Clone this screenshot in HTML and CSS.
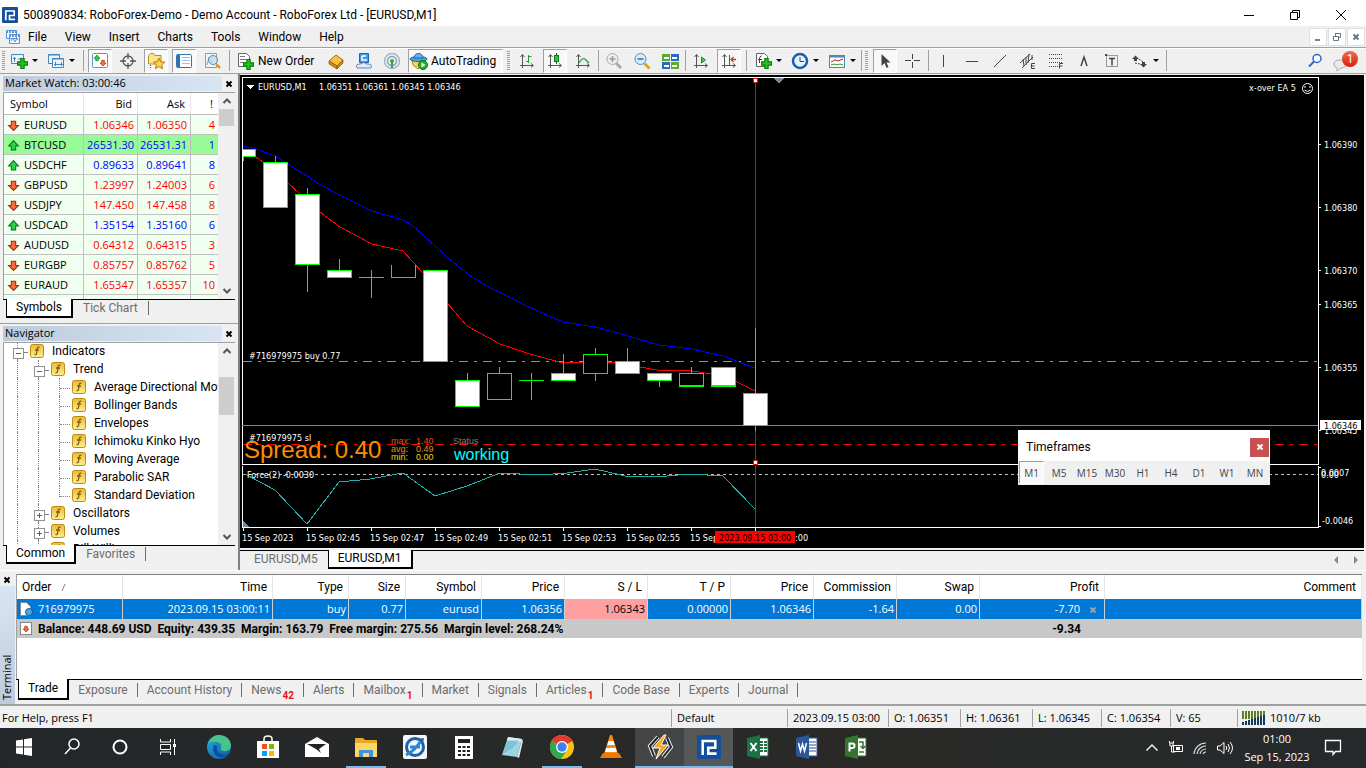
FILE: index.html
```html
<!DOCTYPE html>
<html lang="en">
<head>
<meta charset="utf-8">
<title>500890834: RoboForex-Demo - Demo Account - RoboForex Ltd - [EURUSD,M1]</title>
<link rel="stylesheet" href="styles.css">
</head>
<body>
<svg class="defs" aria-hidden="true">
  <defs>
    <linearGradient id="gold" x1="0" y1="0" x2="0" y2="1"><stop offset="0" stop-color="#e8b93a"/><stop offset="1" stop-color="#fdf08c"/></linearGradient>
    <linearGradient id="edge" x1="0" y1="0" x2="1" y2="1"><stop offset="0" stop-color="#2aa7d8"/><stop offset="1" stop-color="#0c59a4"/></linearGradient>
    <symbol id="up" viewBox="0 0 12 12"><path d="M6 1.500L10.500 6.500H8V10H4V6.500H1.500z" fill="#2fd04a" stroke="#0a7a1c"/></symbol>
    <symbol id="down" viewBox="0 0 12 12"><path d="M6 10.500L1.500 6H4V2H8V6H10.500z" fill="#ff6a3c" stroke="#a82808"/></symbol>
    <symbol id="fn" viewBox="0 0 14 14"><rect x=".5" y=".5" width="13" height="13" rx="2" fill="url(#gold)" stroke="#c08a10"/><path d="M9.500 3.500Q7.500 2.500 7.200 5L6.500 9.500Q6.300 11 4.500 10.500M5 6h4" fill="none" stroke="#8a5a10" stroke-width="1.300"/></symbol>
    <symbol id="axes" viewBox="0 0 20 20"><path d="M5.500 4v13M3 14.500h13M3.500 6l2-2.500 2 2.500M14 12.500l2.500 2-2.500 2" fill="none" stroke="#555"/></symbol>
    <symbol id="plus" viewBox="0 0 10 10"><path d="M3.500.5h3v3h3v3h-3v3h-3v-3h-3v-3h3z" fill="#22c322" stroke="#0a7d0a"/></symbol>
    <symbol id="robo" viewBox="0 0 16 16"><rect width="16" height="16" rx="1" fill="#14509a"/><path d="M3.800 13.300V4h8.400v4.500H7.500V12.400H13" fill="none" stroke="#fff" stroke-width="1.700"/></symbol>
    <symbol id="cross" viewBox="0 0 8 8"><path d="M1.500 1.500l5 5M6.500 1.500l-5 5" stroke="currentColor" stroke-width="2"/></symbol>
    <symbol id="caret-up" viewBox="0 0 10 10"><path d="M1.500 7L5 3.500 8.500 7" fill="none" stroke="#555" stroke-width="2"/></symbol>
    <symbol id="caret-down" viewBox="0 0 10 10"><path d="M1.500 3L5 6.500 8.500 3" fill="none" stroke="#555" stroke-width="2"/></symbol>
    <symbol id="lens" viewBox="0 0 20 20"><path d="M12.500 12.500l5 5" stroke="#d9a520" stroke-width="3"/></symbol>
  </defs>
</svg>

<header class="titlebar">
  <svg class="app-icon"><use href="#robo"/></svg>
  <h1 class="title">500890834: RoboForex-Demo - Demo Account - RoboForex Ltd - [EURUSD,M1]</h1>
  <button class="win" aria-label="Minimize"><svg width="12" height="12"><path d="M1 6.500h10" stroke="#000"/></svg></button>
  <button class="win" aria-label="Restore"><svg width="12" height="12"><path d="M1.500 3.500h7v7h-7zM3.500 3.500v-2h7v7h-2" fill="none" stroke="#000"/></svg></button>
  <button class="win" aria-label="Close"><svg width="12" height="12"><path d="M1 1l10 10M11 1L1 11" stroke="#000"/></svg></button>
</header>

<nav class="menubar">
  <svg class="menu-icon" width="16" height="16"><path d="M1.500 1.500h10v8h-10zM4.500 5.500h10v9h-10z" fill="#f3f9ff" stroke="#5b93d8"/><path d="M1 3h11M4 7h11" stroke="#5b93d8" stroke-width="2" stroke-dasharray="2 1"/><path d="M6 12l2-3 2 4 2-4 1 2" fill="none" stroke="#5b93d8"/></svg>
  <button>File</button><button>View</button><button>Insert</button><button>Charts</button><button>Tools</button><button>Window</button><button>Help</button>
  <span class="spacer"></span>
  <button class="mdi" aria-label="Minimize chart"><svg width="10" height="10"><path d="M2 8h5" stroke="#778899" stroke-width="2"/></svg></button>
  <button class="mdi" aria-label="Restore chart"><svg width="10" height="10"><path d="M1.500 4.500h5v4h-5zM3.500 4v-2.500h5v4h-2M1 4.500h6M3 1.500h6" fill="none" stroke="#667788"/></svg></button>
  <button class="mdi" aria-label="Close chart"><svg width="8" height="8"><use href="#cross"/></svg></button>
</nav>

<div class="toolbar">
  <span class="grip"></span>
  <button class="tb dd" aria-label="New chart"><svg width="20" height="20"><path d="M2.500 3.500h12v9h-12z" fill="#eaf4fd" stroke="#4a86b8"/><path d="M5.500 6v5M4 7.500h3M9 8h4" stroke="#4a86b8"/><use href="#plus" x="8" y="7" width="11" height="11"/></svg></button>
  <button class="tb dd" aria-label="Profiles"><svg width="20" height="20"><path d="M2.500 3.500h11v9h-11z" fill="#eaf4fd" stroke="#4a86b8"/><path d="M6.500 7.500h11v9h-11z" fill="#eaf4fd" stroke="#4a86b8"/><path d="M2 4h12M6 8h12" stroke="#4a86b8"/><path d="M9.500 11v4M15.500 11v4M8 13.500h9" stroke="#4a86b8"/></svg></button>
  <span class="sep first"></span>
  <button class="tb on" aria-label="Market Watch"><svg width="20" height="20"><rect x="2.500" y="2.500" width="15" height="14" rx="1" fill="#fff" stroke="#5a96cc"/><use href="#up" x="3" y="3" width="8" height="8"/><use href="#down" x="9" y="8" width="8" height="8"/></svg></button>
  <button class="tb" aria-label="Data Window"><svg width="20" height="20"><circle cx="10" cy="10" r="5" fill="none" stroke="#555" stroke-width="1.300"/><path d="M10 2v6M10 12v6M2 10h6M12 10h6" stroke="#555" stroke-width="1.300"/></svg></button>
  <button class="tb on" aria-label="Navigator"><svg width="20" height="20"><path d="M2.500 13V4.500l2-2h3l1.500 2h6V13z" fill="#fbe48c" stroke="#b98d1c"/><path d="M4.500 14v4" stroke="#555" stroke-dasharray="1 1"/><path d="M13 7l1.700 3.800 4 .3-3 2.700 1 4-3.700-2.200-3.600 2.200 1-4-3-2.700 4-.3z" fill="#ffd340" stroke="#b07c10"/></svg></button>
  <button class="tb on" aria-label="Terminal"><svg width="20" height="20"><rect x="2.500" y="3.500" width="15" height="13" rx="1" fill="#fff" stroke="#2f74b5"/><path d="M4.500 4v12" stroke="#2f74b5" stroke-width="3"/><path d="M8 6.500h8M8 9.500h8M8 12.500h8" stroke="#9bc1e6"/></svg></button>
  <button class="tb" aria-label="Strategy Tester"><svg width="20" height="20"><path d="M3.500 2.500h11v14h-11z" fill="#f4f4f4" stroke="#999"/><path d="M5 14l2-8 2 6 2-7" fill="none" stroke="#8aa"/><circle cx="11" cy="9" r="4.500" fill="#bfe0f5" fill-opacity=".8" stroke="#5a8db8"/><path d="M14 13l4 4" stroke="#d9a520" stroke-width="2.500"/></svg></button>
  <span class="sep"></span>
  <button class="tb wide"><svg width="20" height="20"><path d="M3.500 2.500h8l3 3v10h-11z" fill="#fff" stroke="#666"/><path d="M5 5.500h5M5 8.500h7M5 11.500h4" stroke="#777"/><use href="#plus" x="8" y="8" width="11" height="11"/></svg>New Order</button>
  <button class="tb" aria-label="MetaEditor"><svg width="20" height="20"><path d="M3 10l7-6 7 5-6 6z" fill="#f5c23c" stroke="#a06a10"/><path d="M3 10v3l8 5v-3zM11 15v3l6-6V9z" fill="#d08a18" stroke="#8a5808" stroke-width=".7"/></svg></button>
  <button class="tb" aria-label="MQL5 community"><svg width="20" height="20"><path d="M5.500 2.500h9v9h-9z" fill="#3d9be8" stroke="#1766b5"/><path d="M8 5h4M8 5v4h5" stroke="#fff" fill="none" stroke-width="1.500"/><path d="M3 17q-2-4 3-4 4-3 7 0 6 0 4 4z" fill="#dcecf8" stroke="#6a87aa"/></svg></button>
  <button class="tb" aria-label="Signals"><svg width="20" height="20"><circle cx="10" cy="10" r="7.500" fill="none" stroke="#9fb8c8" stroke-width="1.500"/><circle cx="10" cy="10" r="4.500" fill="none" stroke="#7fa0b8" stroke-width="1.500"/><circle cx="10" cy="10" r="2" fill="#39a846"/><path d="M10 10v7" stroke="#39a846" stroke-width="2"/></svg></button>
  <button class="tb auto on"><svg width="20" height="20"><path d="M3 9l1 5 5 4 5-4 1-5z" fill="#f8d44c" stroke="#b58712"/><ellipse cx="9.500" cy="8" rx="8.500" ry="2.500" fill="#4aa0dc" stroke="#1c6aa8"/><path d="M5 7Q5.500 2.500 9.500 2.500T14 7z" fill="#62b4ea" stroke="#1c6aa8"/><circle cx="14" cy="14" r="4.500" fill="#28b02c" stroke="#0c7a10"/><path d="M12.500 11.500l4 2.500-4 2.500z" fill="#fff"/></svg>AutoTrading</button>
  <span class="grip gap"></span>
  <button class="tb" aria-label="Bar chart"><svg width="20" height="20"><use href="#axes"/><path d="M11.500 4v8M9 10.500h2.500M11.500 5.500h3" stroke="#2a9a3a"/></svg></button>
  <button class="tb on" aria-label="Candlesticks"><svg width="20" height="20"><use href="#axes"/><path d="M11.500 2v11" stroke="#0a6a1a"/><rect x="9.500" y="4.500" width="4" height="6" fill="#28c840" stroke="#0a7a1c"/></svg></button>
  <button class="tb" aria-label="Line chart"><svg width="20" height="20"><use href="#axes"/><path d="M6 12q4-7 7-3l3 3" fill="none" stroke="#2a9a3a" stroke-width="1.300"/></svg></button>
  <span class="sep thin"></span>
  <button class="tb" aria-label="Zoom in"><svg width="20" height="20"><path d="M12 12l5 5" stroke="#aaa" stroke-width="3"/><circle cx="8.500" cy="8" r="5.500" fill="#eee" stroke="#aaa"/><path d="M5.500 8h6M8.500 5v6" stroke="#999" stroke-width="1.500"/></svg></button>
  <button class="tb" aria-label="Zoom out"><svg width="20" height="20"><use href="#lens"/><circle cx="8.500" cy="8" r="5.500" fill="#d6ecfb" stroke="#4a90cc"/><path d="M5.500 8h6" stroke="#2a70b8" stroke-width="1.500"/></svg></button>
  <button class="tb" aria-label="Tile windows"><svg width="20" height="20"><path d="M2 3h8v7H2zM11 11h8v7h-8z" fill="#5cae28"/><path d="M11 3h8v7h-8zM2 11h8v7H2z" fill="#2a68c8"/><path d="M4 6h5v2H4zM12 6h5v2h-5zM4 14h5v2H4zM12 14h5v2h-5z" fill="#fff"/></svg></button>
  <span class="sep thin"></span>
  <button class="tb" aria-label="Auto scroll"><svg width="20" height="20"><use href="#axes"/><path d="M10.500 6l4 3-4 3z" fill="#48c858" stroke="#1a8a2a"/></svg></button>
  <button class="tb on" aria-label="Chart shift"><svg width="20" height="20"><use href="#axes"/><path d="M10.500 4v10" stroke="#555"/><path d="M12 8.500h5M14.500 6l-2.500 2.500 2.500 2.500" fill="none" stroke="#b84020" stroke-width="1.300"/></svg></button>
  <span class="sep"></span>
  <button class="tb dd" aria-label="Indicators"><svg width="20" height="20"><path d="M3.500 2.500h8l3 3v10h-11z" fill="#fff" stroke="#666"/><path d="M8.500 5q-2 0-2 3v4M5 8.500h4" fill="none" stroke="#444"/><use href="#plus" x="8" y="7" width="11" height="11"/></svg></button>
  <button class="tb dd" aria-label="Periods"><svg width="20" height="20"><circle cx="10" cy="10" r="7" fill="#e8f4fd" stroke="#1c5fb0" stroke-width="2.500"/><path d="M10 6v4.500h4" fill="none" stroke="#345"/></svg></button>
  <button class="tb dd" aria-label="Templates"><svg width="20" height="20"><rect x="2.500" y="4.500" width="15" height="12" fill="#fff" stroke="#4a86b8"/><path d="M2 5.500h16" stroke="#4a86b8" stroke-width="2"/><path d="M4 11l4-2 3 1 5-2" fill="none" stroke="#a03020"/><path d="M4 14l3-1 3 1 3-1 3 1" fill="none" stroke="#2a9a3a"/></svg></button>
  <span class="sep thin"></span>
  <span class="grip gap"></span>
  <button class="tb on" aria-label="Cursor"><svg width="20" height="20"><path d="M6.500 3v12l3-3 2 5 2-1-2-4.500h4z" fill="#444"/></svg></button>
  <button class="tb" aria-label="Crosshair"><svg width="20" height="20"><path d="M9.500 3v5M9.500 11v6M2 9.500h6M11 9.500h6" stroke="#444"/></svg></button>
  <span class="sep thin"></span>
  <button class="tb" aria-label="Vertical line"><svg width="20" height="20"><path d="M9.500 4v12" stroke="#444"/></svg></button>
  <button class="tb" aria-label="Horizontal line"><svg width="20" height="20"><path d="M4 10.500h12" stroke="#444"/></svg></button>
  <button class="tb" aria-label="Trendline"><svg width="20" height="20"><path d="M4 16L16 4" stroke="#444"/></svg></button>
  <button class="tb" aria-label="Equidistant channel"><svg width="20" height="20"><path d="M2 12l10-9M4 17L15 6M5 8l1 7M8 6v8M11 3l-1 9M14 4v5" stroke="#444"/><path d="M17 12.500h-3.500v5H17M13.500 15h3" fill="none" stroke="#444"/></svg></button>
  <button class="tb" aria-label="Fibonacci"><svg width="20" height="20"><path d="M3 3.500h13M3 7.500h13M3 11.500h13M3 15.500h9" stroke="#444" stroke-dasharray="1 1"/><path d="M17 12.500h-3.500v5M13.500 15h3" fill="none" stroke="#444"/></svg></button>
  <button class="tb" aria-label="Text"><svg width="20" height="20"><path d="M7 15l3-9 3 9" fill="none" stroke="#444" stroke-width="1.500"/></svg></button>
  <button class="tb" aria-label="Text label"><svg width="20" height="20"><path d="M4.500 4.500h11v11h-11z" fill="none" stroke="#444" stroke-dasharray="1 1"/><path d="M7 7.500h6M10 7.500v7" stroke="#444" stroke-width="1.500"/><path d="M3 3h2v2H3z" fill="#444"/></svg></button>
  <button class="tb dd" aria-label="Arrows"><svg width="20" height="20"><path d="M2 8l3.500-3.500L9 8H7v2H4V8zM10 13h2v-2h3v2h2l-3.500 3.500z" fill="#444"/><path d="M5 12l5 1M9 8l4 3" stroke="#444" stroke-dasharray="2 1"/></svg></button>
  <span class="sep"></span>
  <span class="spacer"></span>
  <button class="tb" aria-label="Search"><svg width="20" height="20"><circle cx="12" cy="7.500" r="4" fill="#fff" stroke="#2a68d0" stroke-width="1.500"/><path d="M9 10.500l-5 5" stroke="#2a68d0" stroke-width="2"/></svg></button>
  <button class="tb chat" aria-label="Messages: 1"><svg width="24" height="22"><path d="M1 14q0-4 6-4 6 0 6 4t-5 4l-4 3v-3q-3-1-3-4z" fill="#e8eaf0" stroke="#a8acb8"/></svg><span class="count">1</span></button>
</div>

<main class="main">
  <div class="left">
    <section class="panel market">
      <div class="panel-head"><h2>Market Watch: 03:00:46</h2><button class="x" aria-label="Close Market Watch"><svg width="8" height="8"><use href="#cross"/></svg></button></div>
      <div class="panel-body">
        <table class="quotes">
          <thead><tr><th>Symbol</th><th>Bid</th><th>Ask</th><th>!</th></tr></thead>
          <tbody>
            <tr class="dn"><td><svg><use href="#down"/></svg>EURUSD</td><td>1.06346</td><td>1.06350</td><td>4</td></tr>
            <tr class="uq hot"><td><svg><use href="#up"/></svg>BTCUSD</td><td>26531.30</td><td>26531.31</td><td>1</td></tr>
            <tr class="uq"><td><svg><use href="#up"/></svg>USDCHF</td><td>0.89633</td><td>0.89641</td><td>8</td></tr>
            <tr class="dn"><td><svg><use href="#down"/></svg>GBPUSD</td><td>1.23997</td><td>1.24003</td><td>6</td></tr>
            <tr class="dn"><td><svg><use href="#down"/></svg>USDJPY</td><td>147.450</td><td>147.458</td><td>8</td></tr>
            <tr class="uq"><td><svg><use href="#up"/></svg>USDCAD</td><td>1.35154</td><td>1.35160</td><td>6</td></tr>
            <tr class="dn"><td><svg><use href="#down"/></svg>AUDUSD</td><td>0.64312</td><td>0.64315</td><td>3</td></tr>
            <tr class="dn"><td><svg><use href="#down"/></svg>EURGBP</td><td>0.85757</td><td>0.85762</td><td>5</td></tr>
            <tr class="dn"><td><svg><use href="#down"/></svg>EURAUD</td><td>1.65347</td><td>1.65357</td><td>10</td></tr>
            <tr><td></td><td></td><td></td><td></td></tr>
          </tbody>
        </table>
        <div class="scroll"><svg><use href="#caret-up"/></svg><i class="thumb t1"></i><svg><use href="#caret-down"/></svg></div>
      </div>
      <div class="tabs"><button class="tab active">Symbols</button><button class="tab">Tick Chart</button></div>
    </section>
    <section class="panel navigator">
      <div class="panel-head"><h2>Navigator</h2><button class="x" aria-label="Close Navigator"><svg width="8" height="8"><use href="#cross"/></svg></button></div>
      <div class="panel-body">
        <ul class="tree">
          <li><b class="v box minus"></b><svg><use href="#fn"/></svg>Indicators</li>
          <li><b class="v"></b><b class="v box minus"></b><svg><use href="#fn"/></svg>Trend</li>
          <li><b class="v"></b><b class="v"></b><b class="v h"></b><svg><use href="#fn"/></svg>Average Directional Movement</li>
          <li><b class="v"></b><b class="v"></b><b class="v h"></b><svg><use href="#fn"/></svg>Bollinger Bands</li>
          <li><b class="v"></b><b class="v"></b><b class="v h"></b><svg><use href="#fn"/></svg>Envelopes</li>
          <li><b class="v"></b><b class="v"></b><b class="v h"></b><svg><use href="#fn"/></svg>Ichimoku Kinko Hyo</li>
          <li><b class="v"></b><b class="v"></b><b class="v h"></b><svg><use href="#fn"/></svg>Moving Average</li>
          <li><b class="v"></b><b class="v"></b><b class="v h"></b><svg><use href="#fn"/></svg>Parabolic SAR</li>
          <li><b class="v"></b><b class="v"></b><b class="v h last"></b><svg><use href="#fn"/></svg>Standard Deviation</li>
          <li><b class="v"></b><b class="v box plus"></b><svg><use href="#fn"/></svg>Oscillators</li>
          <li><b class="v"></b><b class="v box plus"></b><svg><use href="#fn"/></svg>Volumes</li>
          <li><b class="v"></b><b class="v"></b><svg><use href="#fn"/></svg>Bill Williams</li>
        </ul>
        <div class="scroll"><svg><use href="#caret-up"/></svg><i class="thumb t2"></i><svg><use href="#caret-down"/></svg></div>
      </div>
      <div class="tabs"><button class="tab active">Common</button><button class="tab">Favorites</button></div>
    </section>
  </div>

  <section class="chart">
    <div class="canvas">
      <svg class="plot">
        <g transform="translate(-240 -75)" fill="none" shape-rendering="crispEdges">
          <path d="M242.500 464.500V77.500H3000M242 464.500H3000M242.500 466V527.500H3000" stroke="#fff"/>
          <path d="M242 425.500H3000" stroke="#778899"/>
          <path d="M243 361.500H3000" stroke="#32cd32" stroke-dasharray="9 6 3 6"/>
          <path d="M243 444.500H3000" stroke="#f00" stroke-dasharray="9 6 3 6"/>
          <path d="M243 474.500H3000" stroke="#c0c0c0" stroke-dasharray="3 3"/>
          <path d="M755.500 78V464M755.500 466V527" stroke="#f00"/>
          <polyline stroke="#00f" points="243,146 256,149 275,156 307,176 319,184 340,195 372,211 403,220 412,225 448,258 469,275 485,285 525,305 540,312 563,322 595,327 625,335 658,345 692,349 723,356 755,368"/>
          <polyline stroke="#f00" points="243,152 256,157 263,162 288,183 300,194 320,212 340,227 372,244 403,251 423,273 448,304 467,326 500,344 530,354 563,363 608,362 640,367 657,370 692,371 712,374 737,382 755,391"/>
          <polyline stroke="#20b2aa" points="245,474 260,482 275,490 307,524 339,482 370,479 403,473 435,496 467,486 500,473 540,475 567,473 595,469 625,476 667,476 690,474 723,476 755,509"/>
          <path stroke="#0f0" d="M243.500 156V161M275.500 156V162M307.500 188V292M339.500 259V270M359 277.500H384M371.500 270V298M391.500 265V277.500H415.500V265M467.500 373V380M499.500 367V373M519 380.500H544M531.500 373V400M563.500 354V373M595.500 348V354M595.500 373V381M627.500 348V361M659.500 380V387M691.500 367V373M755.500 328V431"/>
          <g stroke="#0f0" fill="#fff">
            <path d="M243 149.500H255.500V156.500H243"/>
            <rect x="263.500" y="162.500" width="24" height="45"/><rect x="295.500" y="194.500" width="24" height="70"/>
            <rect x="327.500" y="270.500" width="24" height="7"/><rect x="423.500" y="270.500" width="24" height="91"/>
            <rect x="455.500" y="380.500" width="24" height="26"/><rect x="551.500" y="373.500" width="24" height="7"/>
            <rect x="615.500" y="361.500" width="24" height="12"/><rect x="647.500" y="373.500" width="24" height="7"/>
            <rect x="711.500" y="367.500" width="24" height="19"/><rect x="743.500" y="393.500" width="24" height="32"/>
          </g>
          <g stroke="#0f0" fill="#000">
            <rect x="487.500" y="373.500" width="24" height="26"/><rect x="583.500" y="354.500" width="24" height="19"/><rect x="679.500" y="373.500" width="24" height="13"/>
            <path d="M680 385.500H703M712 385.500H735"/>
          </g>
          <g fill="#fff" stroke="#f00"><rect x="753.500" y="78.500" width="4" height="4"/><rect x="753.500" y="460.500" width="4" height="4"/></g>
          <path d="M774 78h10l-5 6zM243 521l6 6h-6z" fill="#778899"/>
          <path d="M246 85h8l-4 4z" fill="#fff"/>
          <path stroke="#fff" d="M243.500 528v3M307.500 528v3M371.500 528v3M435.500 528v3M499.500 528v3M563.500 528v3M627.500 528v3M691.500 528v3M755.500 528v3"/>
        </g>
        <g transform="translate(-240 -75)" class="ct">
          <text x="258" y="90">EURUSD,M1</text><text x="319" y="90">1.06351 1.06361 1.06345 1.06346</text>
          <text x="249" y="359">#716979975 buy 0.77</text>
          <text x="249" y="441">#716979975 sl</text>
          <text x="247" y="478">Force(2) -0.0030</text>
          <text x="244" y="458" class="spread">Spread: 0.40</text>
          <g class="stats">
            <text x="391" y="444" fill="#f04a10">max:</text><text x="416" y="444" fill="#f04a10">1.40</text>
            <text x="391" y="452" fill="#f08a10">avg:</text><text x="416" y="452" fill="#f08a10">0.49</text>
            <text x="391" y="460" fill="#e8d800">min:</text><text x="416" y="460" fill="#e8d800">0.00</text>
            <text x="453" y="444" fill="#808080">Status</text>
          </g>
          <text x="454" y="460" class="working">working</text>
          <text x="242" y="541">15 Sep 2023</text><text x="306" y="541">15 Sep 02:45</text><text x="370" y="541">15 Sep 02:47</text><text x="434" y="541">15 Sep 02:49</text><text x="498" y="541">15 Sep 02:51</text><text x="562" y="541">15 Sep 02:53</text><text x="626" y="541">15 Sep 02:55</text><text x="690" y="541">15 Sep 02:57</text><text x="754" y="541">15 Sep 03:00</text>
          <rect x="715" y="531" width="80" height="12" fill="#f00"/>
          <text x="719" y="541" class="dark">2023.09.15 03:00</text>
        </g>
        <svg x="100%" y="0" overflow="visible"><g transform="translate(-1318 -75)">
          <text x="1249" y="91" class="ct">x-over EA 5</text>
          <circle cx="1307.500" cy="88.500" r="5" fill="none" stroke="#fff"/><path d="M1305 86v2M1310 86v2M1304.500 90q3 3 6 0" stroke="#fff" fill="none"/>
        </g></svg>
      </svg>
      <svg class="axis">
        <g transform="translate(-1318 -75)">
          <path d="M1318.500 77V465M1318.500 466V528M1319 144.500h2M1319 207.500h2M1319 270.500h2M1319 304.500h2M1319 367.500h2M1319 430.500h2M1319 467.500h2M1319 526.500h2" stroke="#fff" shape-rendering="crispEdges"/>
          <g class="ct">
            <text x="1324" y="148">1.06390</text><text x="1324" y="211">1.06380</text><text x="1324" y="274">1.06370</text><text x="1324" y="308">1.06365</text><text x="1324" y="371">1.06355</text><text x="1324" y="434">1.06345</text>
            <rect x="1320" y="420" width="41" height="10" fill="#fff"/><text x="1324" y="429" class="dark">1.06346</text>
            <text x="1321" y="476">0.0007</text><text x="1321" y="478">0.00</text><text x="1322" y="524">-0.0046</text>
          </g>
        </g>
      </svg>
      <aside class="frames">
        <div class="frames-head"><h2>Timeframes</h2><button aria-label="Close Timeframes"><svg width="8" height="8"><use href="#cross"/></svg></button></div>
        <div class="frames-row"><button class="on">M1</button><button>M5</button><button>M15</button><button>M30</button><button>H1</button><button>H4</button><button>D1</button><button>W1</button><button>MN</button></div>
      </aside>
    </div>
    <div class="tabs chart-tabs"><button class="tab">EURUSD,M5</button><button class="tab active">EURUSD,M1</button><span class="spacer"></span><svg width="32" height="18"><path d="M6 5v8L2 9zM22 5v8l4-4z" fill="#888"/></svg></div>
  </section>
</main>

<section class="terminal">
  <div class="side"><button class="x" aria-label="Close Terminal"><svg width="8" height="8"><use href="#cross"/></svg></button><h2>Terminal</h2></div>
  <div class="term-main">
    <div class="term-body">
      <table class="orders">
        <colgroup><col class="w106"><col class="w150"><col class="w76"><col class="w57"><col class="w76"><col class="w83"><col class="w83"><col class="w83"><col class="w83"><col class="w83"><col class="w83"><col class="w125"><col></colgroup>
        <thead><tr><th>Order <svg width="8" height="8"><path d="M2 8l3-7" stroke="#888"/></svg></th><th>Time</th><th>Type</th><th>Size</th><th>Symbol</th><th>Price</th><th>S / L</th><th>T / P</th><th>Price</th><th>Commission</th><th>Swap</th><th>Profit</th><th>Comment</th></tr></thead>
        <tbody>
          <tr class="sel"><td><svg width="14" height="14"><path d="M1.500.5h6l4 4v9h-10z" fill="#fff" stroke="#888"/><circle cx="10" cy="10" r="3.500" fill="#4aa8e8" stroke="#1560a8"/></svg>716979975</td><td>2023.09.15 03:00:11</td><td>buy</td><td>0.77</td><td>eurusd</td><td>1.06356</td><td class="sl">1.06343</td><td>0.00000</td><td>1.06346</td><td>-1.64</td><td>0.00</td><td>-7.70<button class="x kill" aria-label="Close order"><svg width="8" height="8"><use href="#cross"/></svg></button></td><td></td></tr>
          <tr class="sum"><td colspan="11"><svg width="14" height="14"><rect x="1.500" y=".5" width="11" height="12" fill="#fff" stroke="#888"/><use href="#down" x="3" y="3" width="8" height="8"/></svg>Balance: 448.69 USD&#160; Equity: 439.35&#160; Margin: 163.79&#160; Free margin: 275.56&#160; Margin level: 268.24%</td><td>-9.34</td><td></td></tr>
        </tbody>
      </table>
    </div>
    <div class="tabs"><button class="tab active">Trade</button><button class="tab">Exposure</button><button class="tab">Account History</button><button class="tab">News<sub>42</sub></button><button class="tab">Alerts</button><button class="tab">Mailbox<sub>1</sub></button><button class="tab">Market</button><button class="tab">Signals</button><button class="tab">Articles<sub>1</sub></button><button class="tab">Code Base</button><button class="tab">Experts</button><button class="tab">Journal</button></div>
  </div>
</section>

<div class="status">
  <span class="help">For Help, press F1</span><span class="s116">Default</span><span class="s102">2023.09.15 03:00</span><span class="s71">O: 1.06351</span><span class="s71">H: 1.06361</span><span class="s69">L: 1.06345</span><span class="s69">C: 1.06354</span><span class="s67">V: 65</span>
  <span class="conn"><svg width="24" height="14"><path d="M0 4h24" stroke="#5f7f1f" stroke-width="8" stroke-dasharray="2 1"/><path d="M1 14v-3M4 14v-4M7 14v-5M10 14v-6M13 14v-7M16 14v-8M19 14v-9M22 14V4" stroke="#123c5c" stroke-width="2"/></svg>1010/7 kb</span>
</div>

<footer class="taskbar">
  <button aria-label="Start"><svg width="28" height="28"><path d="M6 7.500l7-1v7H6zM14 6.300l8-1.300v8.500h-8zM6 14.500h7v7l-7-1zM14 14.500h8V23l-8-1.300z" fill="#fff"/></svg></button>
  <button aria-label="Search"><svg width="28" height="28"><circle cx="16" cy="11" r="5" fill="none" stroke="#fff" stroke-width="1.500"/><path d="M12.500 15L7 21" stroke="#fff" stroke-width="1.500"/></svg></button>
  <button aria-label="Cortana"><svg width="28" height="28"><circle cx="14" cy="14" r="6.500" fill="none" stroke="#fff" stroke-width="2"/></svg></button>
  <button aria-label="Task view"><svg width="28" height="28"><path d="M6.500 6v3h10V6M6.500 22v-3h10v3M6.500 11.500h10v5h-10zM20.500 6v16" fill="none" stroke="#fff"/><path d="M19 11h3v3h-3z" fill="#fff"/></svg></button>
  <button class="app" aria-label="Edge"><svg width="28" height="28"><circle cx="14" cy="14" r="12" fill="url(#edge)"/><path d="M3 11Q6 2 14.500 2 25 3 26 12q0 7-8 6-3-1-2-3 1-5-4-6-6-1-9 2z" fill="#46c48a"/><path d="M9 12q-3 7 3 11 7 3 11-2-6 2-10-2-2-3-1-6z" fill="#0b4f9c"/></svg></button>
  <button class="app" aria-label="Store"><svg width="28" height="28"><path d="M10 9V6q0-3 4-3t4 3v3" fill="none" stroke="#fff" stroke-width="1.500"/><path d="M3 8h22v17H3z" fill="#fff"/><path d="M8 11h5v5H8z" fill="#f25022"/><path d="M15 11h5v5h-5z" fill="#7fba00"/><path d="M8 18h5v5H8z" fill="#00a4ef"/><path d="M15 18h5v5h-5z" fill="#ffb900"/></svg></button>
  <button class="app" aria-label="Mail"><svg width="28" height="28"><path d="M2 11L14 4l12 7v13H2z" fill="#fff"/><path d="M4 11h19l-7 5 2 4-5-4z" fill="#222"/></svg></button>
  <button class="app run" aria-label="File Explorer"><svg width="28" height="28"><path d="M3 5h8l2 2h12v17H3z" fill="#e8a820"/><path d="M3 10h22v14H3z" fill="#fcd667"/><path d="M7 24v-7h14v7h-4v-4h-6v4z" fill="#3a94e0"/></svg></button>
  <button class="app" aria-label="Updater"><svg width="28" height="28"><rect x="2" y="2" width="24" height="24" rx="2" fill="#f4f6f8"/><circle cx="14" cy="14" r="8.500" fill="none" stroke="#1b62a8" stroke-width="3"/><path d="M5 22Q14 18 21 6M9 14h10" fill="none" stroke="#2b86d0" stroke-width="3"/><path d="M17 6l6-1-1 6z" fill="#1b62a8"/></svg></button>
  <button class="app" aria-label="Calculator"><svg width="28" height="28"><path d="M5 3h18v23H5z" fill="#fff"/><path d="M8 6h12v4H8z" fill="#222"/><path d="M8 14h12M8 18h12M8 22h12" stroke="#222" stroke-width="2" stroke-dasharray="3 1.500"/></svg></button>
  <button class="app" aria-label="Notepad"><svg width="28" height="28"><path d="M9 4l14 2-5 18-15-2z" fill="#9fd4e4"/><path d="M9 4l14 2-1 3-14-2z" fill="#d8eef5"/><path d="M23 6l1 2-4 17-2-1z" fill="#e8e8e8"/><path d="M8 8l-4 13 10-6 6-8z" fill="#6fb4c8" fill-opacity=".6"/></svg></button>
  <button class="app run" aria-label="Chrome"><svg width="28" height="28"><circle cx="14" cy="14" r="12" fill="#fbc116"/><path d="M14 14L3.600 8A12 12 0 0 1 24.400 8z" fill="#e33b2e"/><path d="M14 14L3.600 8A12 12 0 0 0 13 26l6-9z" fill="#2da94f"/><circle cx="14" cy="14" r="6" fill="#fff"/><circle cx="14" cy="14" r="4.700" fill="#3f7fee"/></svg></button>
  <button class="app" aria-label="VLC"><svg width="28" height="28"><path d="M13 2h2l6 19H7z" fill="#ff8a10"/><path d="M11.500 8h5l1.300 4h-7.600zM9.200 15h9.600l1 4H8z" fill="#fff"/><path d="M6 20h16l3 5H3z" fill="#f07808"/></svg></button>
  <button class="app run open" aria-label="Winamp"><svg width="28" height="28"><path d="M12 4L4 13l4 10M17 24l8-10-4-9" fill="none" stroke="#eee" stroke-width="4"/><path d="M12 4L4 13l4 10M17 24l8-10-4-9" fill="none" stroke="#222" stroke-width="2"/><path d="M18 2L7 15h7l-4 11 12-14h-7l5-10z" fill="#f7a820" stroke="#fff"/></svg></button>
  <button class="app run open current" aria-label="RoboForex"><svg width="24" height="24"><use href="#robo"/></svg></button>
  <button class="app" aria-label="Excel"><svg width="28" height="28"><path d="M14 5h10v18H14z" fill="#fff" stroke="#1e7145"/><path d="M16 9h7M16 12h7M16 15h7M16 18h7" stroke="#1e7145" stroke-width="2" stroke-dasharray="3 1"/><path d="M3 5l13-3v24L3 23z" fill="#1e7145"/><path d="M6.500 10l6 8M12.500 10l-6 8" stroke="#fff" stroke-width="2"/></svg></button>
  <button class="app" aria-label="Word"><svg width="28" height="28"><path d="M14 5h10v18H14z" fill="#fff" stroke="#2b579a"/><path d="M16 9h7M16 12h7M16 15h7M16 18h7" stroke="#2b579a"/><path d="M3 5l13-3v24L3 23z" fill="#2b579a"/><path d="M5.500 10l2 8 2-7 2 7 2-8" fill="none" stroke="#fff" stroke-width="1.500"/></svg></button>
  <button class="app" aria-label="Project"><svg width="28" height="28"><path d="M14 5h10v18H14z" fill="#fff" stroke="#31752f"/><path d="M17 9h4v6M18.500 13l2.500 2.500 2.500-2.500M17 19h5" fill="none" stroke="#31752f" stroke-width="1.500"/><path d="M3 5l13-3v24L3 23z" fill="#31752f"/><path d="M7.500 18.500v-8h2.500q2.500 0 2.500 2.300T10 15H7.500" fill="none" stroke="#fff" stroke-width="2"/></svg></button>
  <span class="spacer"></span>
  <div class="tray">
    <svg width="16" height="16"><path d="M2.500 10.500L8 5l5.500 5.500" fill="none" stroke="#fff" stroke-width="1.300"/></svg>
    <svg width="16" height="16"><path d="M5.500 5.500h9v6h-9z" fill="none" stroke="#fff"/><path d="M8 7h4v3H8z" fill="#fff"/><path d="M1.500 1v2h4V1M2 3v3h3V3M3.500 6v6H7" fill="none" stroke="#fff"/></svg>
    <svg width="16" height="16"><path d="M2 14A12 12 0 0 1 14 3M5 14a9 9 0 0 1 9-8M8 14a6 6 0 0 1 6-5M11 14a3 3 0 0 1 3-2" fill="none" stroke="#ddd" stroke-width="1.200"/></svg>
    <svg width="18" height="16"><path d="M1.500 6v4H4l4 3.500v-11L4 6z" fill="none" stroke="#fff"/><path d="M10 6q1.500 2 0 4M12 4q3 4 0 8M14 2q5 6 0 12" fill="none" stroke="#fff"/></svg>
  </div>
  <div class="clock"><span>01:00</span><span>Sep 15, 2023</span></div>
  <button class="note" aria-label="Notifications"><svg width="18" height="18"><path d="M1.500 2.500h15v11h-5l-2.500 3v-3h-7.500z" fill="none" stroke="#fff" stroke-width="1.300"/></svg></button>
</footer>
</body>
</html>
```
FILE: styles.css
```css
* { box-sizing: border-box; }
body {
  margin: 0;
  min-height: 100vh;
  display: flex;
  flex-direction: column;
  overflow: hidden;
  background: #f0f0f0;
  color: #000;
  font: 11px/16px "Open Sans", "Noto Sans", sans-serif;
}
h1, h2 { margin: 0; font: inherit; }
button { margin: 0; padding: 0; border: 0; background: none; color: inherit; font: inherit; }
svg { display: block; flex: none; }
.defs { position: absolute; width: 0; height: 0; }
.spacer { flex: 1; }
.titlebar, .menubar, .toolbar, .tabs, .tree, .frames-head, .orders th, .orders .sum { font-family: Roboto, "Open Sans", sans-serif; font-size: 12px; }

/* window frame */
.titlebar { display: flex; align-items: center; height: 26px; background: #fff; padding: 4px 2px 0 0; }
.app-icon { width: 16px; height: 16px; margin: 0 5px 0 2px; }
.title { flex: 1; }
.win { width: 46px; height: 22px; display: grid; place-items: center; }
.menubar { display: flex; align-items: center; height: 21px; }
.menu-icon { margin: 0 7px 0 5px; }
.menubar button { margin-right: 18px; }
.menubar .mdi { width: 18px; height: 18px; margin: 0 1px 0 0; border: 1px solid #e0e0e0; background: #fff; display: grid; place-items: center; color: #667788; }

/* toolbar */
.toolbar { display: flex; align-items: center; height: 27px; border-top: 1px solid #a0a0a0; border-bottom: 1px solid #a0a0a0; box-shadow: inset 0 1px #fff; }
.grip { width: 5px; height: 20px; border-left: 2px solid #f0f0f0; background: repeating-linear-gradient(#a0a0a0 0 1px, #f0f0f0 1px 2px); }
.grip.gap { width: 8px; border-right: 3px solid #f0f0f0; }
.tb { width: 24px; height: 24px; margin: 0 2px; display: flex; align-items: center; justify-content: center; white-space: nowrap; border: 1px solid transparent; }
.tb.on { border-color: #a0a0a0 #fff #fff #a0a0a0; background: #f8f8f8; }
.tb.dd { width: 33px; justify-content: flex-start; gap: 3px; padding-left: 1px; }
.tb.dd::after { content: ""; border: 3px solid transparent; border-top-color: #000; border-bottom: 0; }
.tb.wide { width: 86px; justify-content: flex-start; gap: 3px; }
.tb.auto { width: 95px; justify-content: flex-start; gap: 2px; }
.sep { width: 1px; height: 21px; margin: 0 2px 0 3px; background: #a0a0a0; }
.sep.first { margin-left: 4px; }
.sep.thin { margin: 0 1px; }
.chat { width: 28px; margin-right: 7px; position: relative; }
.count { position: absolute; top: 1px; right: 0; width: 16px; height: 16px; border-radius: 8px; background: linear-gradient(#f26a4c, #d8200c); color: #fff; text-align: center; }

/* docked panels */
.main { flex: 1; display: flex; border-bottom: 1px solid #fff; }
.left { width: 240px; flex: none; display: flex; flex-direction: column; border-right: 2px solid #808080; }
.panel { padding: 2px 3px 4px 3px; display: flex; flex-direction: column; }
.market { height: 250px; border-bottom: 1px solid #a0a0a0; }
.navigator { flex: 1; padding-bottom: 5px; }
.panel-head { display: flex; height: 15px; margin-bottom: 1px; line-height: 14px; }
.panel-head h2 { flex: 1; padding-left: 2px; background: linear-gradient(90deg, #bccadb, #d8e6f4); }
.x { width: 13px; display: grid; place-items: center; }
.panel-body { flex: 1 1 0; min-height: 0; display: flex; overflow: hidden; border-left: 1px solid #a0a0a0; border-top: 1px solid #a0a0a0; background: #fff; }
.scroll { width: 17px; display: flex; flex-direction: column; align-items: center; background: #f0f0f0; }
.scroll svg { width: 10px; height: 10px; margin: 3px 0; }
.thumb { width: 15px; background: #cdcdcd; margin-bottom: auto; }
.t1 { height: 17px; }
.t2 { height: 38px; margin-top: 18px; }
.quotes { flex: 1; table-layout: fixed; border-spacing: 0; background: #f0fff0; }
.quotes th { height: 22px; padding: 0 5px; font-weight: 400; text-align: right; background: #fff; border-right: 1px solid #e5e5e5; }
.quotes th:first-child { width: 80px; padding-left: 6px; text-align: left; }
.quotes th:nth-child(3) { width: 53px; }
.quotes th:nth-child(4) { width: 27px; }
.quotes td { height: 20px; padding: 0 3px 0 0; line-height: 18px; text-align: right; border: solid #c0c0c0; border-width: 0 1px 1px 0; }
.quotes thead th { border-bottom: 1px solid #c0c0c0; }
.quotes td:first-child { text-align: left; color: #000; padding-left: 3px; }
.quotes td svg { display: inline-block; width: 13px; height: 13px; vertical-align: -3px; margin-right: 4px; }
.quotes td:last-child, .quotes th:last-child { border-right: 0; }
.dn { color: #f00; }
.uq { color: #00f; }
.hot { background: #98fb98; }

.tabs { display: flex; height: 20px; padding-left: 3px; border-top: 1px solid #000; color: #6d6d6d; }
.tab { padding: 0 10px; display: flex; align-items: center; white-space: nowrap; }
.tab:not(.active) { margin-top: 1px; height: 14px; border-right: 1px solid #6d6d6d; }
.tab.active { height: 19px; margin-top: -1px; padding: 0 9px 1px; border: solid #000; border-width: 0 2px 2px 1px; background: #fff; color: #000; }

.tree { flex: 1; margin: -1px 0 0; padding: 0 0 0 3px; list-style: none; overflow: hidden; }
.tree li { display: flex; align-items: center; height: 18px; white-space: nowrap; }
.tree li svg { width: 14px; height: 14px; margin: 0 8px 0 2px; }
.tree b { position: relative; width: 21px; height: 18px; flex: none; }
.v::before { content: ""; position: absolute; left: 10px; top: 0; bottom: 0; border-left: 1px dotted #808080; }
.v.h::after { content: ""; position: absolute; left: 11px; right: 0; top: 10px; border-top: 1px dotted #808080; }
.v.last::before { bottom: 7px; }
.v.box { background: linear-gradient(#808080, #808080) 14px 10px / 7px 1px no-repeat; }
.v.box::after { content: ""; position: absolute; left: 6px; top: 6px; width: 9px; height: 9px; border: 1px solid #919191; background: linear-gradient(#3a5fb8, #3a5fb8) center / 5px 1px no-repeat, #fff; }
.v.plus::after { background: linear-gradient(#3a5fb8, #3a5fb8) center / 5px 1px no-repeat, linear-gradient(#3a5fb8, #3a5fb8) center / 1px 5px no-repeat, #fff; }

/* chart window */
.chart { flex: 1; min-width: 0; display: flex; flex-direction: column; padding: 1px 2px 0 0; }
.canvas { flex: 1; position: relative; display: flex; background: #000; }
.plot { flex: 1; min-width: 0; height: 473px; }
.axis { width: 46px; height: 473px; }
.ct { fill: #fff; font: 9px "DejaVu Sans Condensed", "DejaVu Sans", sans-serif; }
.dark { fill: #000; }
.spread { fill: #ff8c00; font: 24px "Liberation Sans", Arial, sans-serif; }
.stats { font: 9px "Liberation Sans", Arial, sans-serif; }
.working { fill: #0ff; font: 16px "Liberation Sans", Arial, sans-serif; }
.frames { position: absolute; right: 94px; top: 355px; width: 252px; background: #f0f0f0; }
.frames-head { display: flex; align-items: center; height: 31px; padding: 3px 1px 0 8px; background: #fff; }
.frames-head h2 { flex: 1; }
.frames-head button { width: 19px; height: 19px; display: grid; place-items: center; background: #c75050; color: #fff; }
.frames-row { display: flex; height: 24px; padding-left: 1px; color: #444; font-size: 10px; }
.frames-row button { width: 28px; height: 23px; }
.frames-row .on { width: 25px; margin-right: 1px; border: 1px solid #a0a0a0; border-color: #a0a0a0 #fff #fff #a0a0a0; background: #f8f8f8; }
.chart-tabs { margin-top: 2px; padding-left: 4px; }
.chart-tabs .tab:not(.active) { border: 0; }

/* terminal */
.terminal { display: flex; height: 135px; padding-top: 3px; border-bottom: 2px solid #a0a0a0; }
.side { width: 16px; display: flex; flex-direction: column; }
.side .x { height: 12px; }
.side h2 { flex: 1; margin: 0 1px 0 0; padding-top: 4px; writing-mode: vertical-rl; transform: rotate(180deg); line-height: 14px; background: linear-gradient(#bccadb, #d8e6f4); }
.term-main { flex: 1; min-width: 0; display: flex; flex-direction: column; padding-right: 4px; }
.term-body { flex: 1; border-top: 1px solid #808080; border-left: 1px solid #a0a0a0; background: #fff; }
.orders { width: 100%; table-layout: fixed; border-spacing: 0; }
.orders th { height: 24px; padding: 0 5px 0 0; font-weight: 400; text-align: right; border-right: 1px solid #e5e5e5; }
.orders th:first-child { text-align: left; padding-left: 5px; }
.orders th svg { display: inline-block; margin-left: 6px; }
.orders td { height: 20px; padding: 0 2px 0 0; text-align: right; line-height: 18px; }
.orders td:first-child { text-align: left; padding-left: 2px; }
.orders td svg { display: inline-block; vertical-align: -3px; margin-right: 5px; }
.sel { background: #0078d7; color: #fff; }
.sel td { border-right: 1px solid #d0d0d0; }
.orders .sl { background: #ffa0a0; color: #000; }
.orders .sum td { height: 19px; background: #c8c8c8; font-weight: 700; }
.orders .sum td:nth-child(2) { padding-right: 24px; }
.orders .kill { display: inline-block; width: 13px; margin: 0 3px 0 6px; color: #a0a0a0; }
.orders .kill svg { margin: 0; vertical-align: -1px; }
.w106 { width: 106px; } .w150 { width: 150px; } .w76 { width: 76px; } .w57 { width: 57px; } .w83 { width: 83px; } .w125 { width: 125px; }
.terminal .tabs { height: 25px; padding-left: 2px; }
.terminal .tab.active { height: 21px; }
.terminal .tab:not(.active) { margin-top: 3px; padding: 0 9px; }
sub { align-self: flex-end; margin: 0 0 -4px 1px; color: #e81123; font-weight: 700; font-size: 10px; line-height: 10px; vertical-align: baseline; }

/* status line */
.status { display: flex; height: 22px; align-items: center; padding: 2px 0 1px 2px; }
.status span { height: 18px; line-height: 18px; padding-left: 5px; border-left: 1px solid #a0a0a0; white-space: nowrap; }
.status .help { flex: 1; padding: 0; border: 0; }
.s116 { width: 116px; } .s102 { width: 101px; } .s71 { width: 72px; } .s69 { width: 69px; } .s67 { width: 67px; }
.status .conn { width: 129px; display: flex; align-items: center; gap: 4px; padding-left: 4px; }

/* taskbar */
.taskbar { display: flex; height: 40px; background: linear-gradient(90deg, #232729, #2a2928 60%, #26292b); color: #fff; font-size: 12px; }
.taskbar button { width: 48px; display: grid; place-items: center; border-bottom: 2px solid transparent; }
.taskbar .app { width: 49px; }
.taskbar button:nth-child(5) { margin-left: 2px; }
.taskbar .run { background: linear-gradient(#76b9ed, #76b9ed) center bottom / 40px 2px no-repeat border-box; }
.taskbar .open { border-color: #76b9ed; background: #444547; }
.taskbar .current { background: #555759; }
.tray { display: flex; align-items: center; gap: 8px; }
.clock { width: 82px; margin-left: 2px; padding: 2px 0; display: flex; flex-direction: column; align-items: center; font-size: 11px; line-height: 18px; }
.taskbar .note { width: 30px; margin-right: 18px; }
```
